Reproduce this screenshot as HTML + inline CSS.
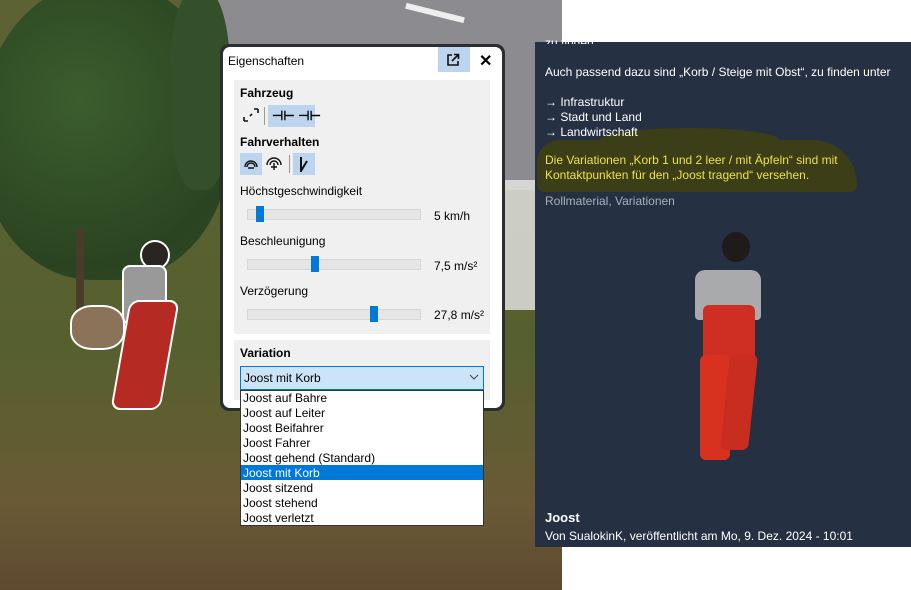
<!DOCTYPE html>
<html><head><meta charset="utf-8"><style>
*{margin:0;padding:0;box-sizing:border-box}
body{width:911px;height:590px;overflow:hidden;position:relative;background:#fff;font-family:"Liberation Sans",sans-serif;font-size:12px}
.a{position:absolute}
.t{position:absolute;white-space:nowrap}
</style></head><body>
<!-- scene -->
<div class="a" style="left:0;top:0;width:562px;height:590px;background:linear-gradient(180deg,#5d6233 0%,#56602e 60%,#6a5a36 85%,#5e4a30 100%)"></div>
<div class="a" style="left:190px;top:0;width:372px;height:190px;background:#8b8b90"></div>
<div class="a" style="left:405px;top:10px;width:60px;height:6px;background:#eee;transform:rotate(14deg)"></div>
<div class="a" style="left:-20px;top:-20px;width:250px;height:300px;border-radius:50% 50% 45% 45%;background:radial-gradient(circle at 40% 40%,#3c5e2e,#2a4421 70%,#304a26)"></div>
<div class="a" style="left:170px;top:-10px;width:60px;height:200px;background:#34502a;border-radius:40%"></div>
<div class="a" style="left:76px;top:230px;width:8px;height:80px;background:#4a3b2a"></div>
<div class="a" style="left:505px;top:180px;width:57px;height:130px;background:#e8e8e8;opacity:.8"></div>
<!-- man left -->
<div class="a" style="left:140px;top:240px;width:30px;height:30px;border-radius:50%;background:#2a2522;border:2px solid #fff"></div>
<div class="a" style="left:122px;top:265px;width:45px;height:60px;background:#999;border-radius:8px;border:2px solid #fff"></div>
<div class="a" style="left:120px;top:300px;width:50px;height:110px;background:#b52a22;border-radius:10px;border:2px solid #fff;transform:skewX(-10deg)"></div>
<div class="a" style="left:70px;top:305px;width:55px;height:45px;background:#8a7358;border-radius:40%;border:2px solid #fff"></div>
<!-- dialog -->
<div class="a" style="left:220px;top:44px;width:285px;height:367px;background:#2a2e30;border-radius:9px"></div>
<div class="a" style="left:223px;top:47px;width:279px;height:361px;background:#fff;border-radius:7px"></div>
<div class="t" style="left:228px;top:54px">Eigenschaften</div>
<div class="a" style="left:438px;top:47px;width:32px;height:25px;background:#bcd4ee"></div>
<svg class="a" style="left:446px;top:53px" width="14" height="14" viewBox="0 0 14 14"><path d="M6 2H2v10h10V8M8 1.5h4.5V6M12.5 1.5L6 8" fill="none" stroke="#111" stroke-width="1.6"/></svg>
<div class="t" style="left:479px;top:51px;font-size:16px;font-weight:bold">✕</div>
<div class="a" style="left:234px;top:80px;width:256px;height:254px;background:#f0f0f0"></div>
<div class="t" style="left:240px;top:86px;font-weight:bold">Fahrzeug</div>
<svg class="a" style="left:243px;top:108px" width="16" height="14"><path d="M1 13h4M1 13V9M15 1h-4M15 1v4M7 8l2-2" stroke="#111" stroke-width="1.6" fill="none"/></svg>
<div class="a" style="left:264px;top:107px;width:1px;height:18px;background:#999"></div>
<div class="a" style="left:268px;top:105px;width:47px;height:22px;background:#bcd4ee"></div>
<div class="t" style="left:272px;top:108px;font-weight:bold;font-size:13px">⊣⊢ ⊣⊢</div>
<div class="t" style="left:240px;top:135px;font-weight:bold">Fahrverhalten</div>
<div class="a" style="left:240px;top:153px;width:22px;height:22px;background:#bcd4ee"></div>
<svg class="a" style="left:243px;top:157px" width="16" height="12"><path d="M2 10A6 6 0 0 1 14 10M4 10A4 4 0 0 1 12 10M5 11h6" stroke="#111" stroke-width="1.4" fill="none"/></svg>
<svg class="a" style="left:265px;top:156px" width="18" height="15"><path d="M2 9A7 7 0 0 1 16 9M5 9A4 4 0 0 1 13 9M9 7v7M6 11h6" stroke="#111" stroke-width="1.4" fill="none"/></svg>
<div class="a" style="left:289px;top:155px;width:1px;height:18px;background:#999"></div>
<div class="a" style="left:293px;top:153px;width:22px;height:22px;background:#bcd4ee"></div>
<svg class="a" style="left:298px;top:156px" width="12" height="16"><path d="M3 1v14L9 5" stroke="#111" stroke-width="2" fill="none"/></svg>
<div class="t" style="left:240px;top:184px">Höchstgeschwindigkeit</div>
<div class="t" style="left:240px;top:234px">Beschleunigung</div>
<div class="t" style="left:240px;top:284px">Verzögerung</div>
<div class="a" style="left:247px;top:209px;width:174px;height:11px;background:#e6e6e6;border:1px solid #d6d6d6"></div>
<div class="a" style="left:256px;top:206px;width:8px;height:16px;background:#0078d7"></div>
<div class="t" style="left:434px;top:209px">5 km/h</div>
<div class="a" style="left:247px;top:259px;width:174px;height:11px;background:#e6e6e6;border:1px solid #d6d6d6"></div>
<div class="a" style="left:311px;top:256px;width:8px;height:16px;background:#0078d7"></div>
<div class="t" style="left:434px;top:259px">7,5 m/s²</div>
<div class="a" style="left:247px;top:309px;width:174px;height:11px;background:#e6e6e6;border:1px solid #d6d6d6"></div>
<div class="a" style="left:370px;top:306px;width:8px;height:16px;background:#0078d7"></div>
<div class="t" style="left:434px;top:308px">27,8 m/s²</div>
<div class="a" style="left:234px;top:340px;width:256px;height:60px;background:#f0f0f0"></div>
<div class="t" style="left:240px;top:346px;font-weight:bold">Variation</div>
<div class="a" style="left:240px;top:366px;width:244px;height:24px;background:#cce4f7;border:1px solid #0078d7"></div>
<div class="t" style="left:244px;top:371px">Joost mit Korb</div>
<svg class="a" style="left:469px;top:374px" width="10" height="7"><path d="M1 1l4 4 4-4" stroke="#444" fill="none"/></svg>
<div class="a" style="left:240px;top:390px;width:244px;height:136px;background:#fff;border:1px solid #333"></div>
<div class="a" style="left:241px;top:465px;width:242px;height:15px;background:#0078d7"></div>
<div class="a" style="left:243px;top:391px;line-height:15px">Joost auf Bahre<br>Joost auf Leiter<br>Joost Beifahrer<br>Joost Fahrer<br>Joost gehend (Standard)<br><span style="color:#fff">Joost mit Korb</span><br>Joost sitzend<br>Joost stehend<br>Joost verletzt</div>
<!-- right panel -->
<div class="a" style="left:530px;top:0;width:32px;height:42px;background:#8b8b90"></div>
<div class="a" style="left:535px;top:42px;width:376px;height:505px;background:#253143"></div>
<div class="a" style="left:537px;top:140px;width:320px;height:52px;background:#3b3e17;border-radius:30px 60px 10px 10px"></div>
<div class="a" style="left:600px;top:128px;width:180px;height:25px;background:#3b3e17;border-radius:50%"></div>
<div class="t" style="left:545px;top:36px;color:#fff;height:8px;overflow:hidden">zu finden.</div>
<div class="a" style="left:545px;top:65px;color:#fff;line-height:15px">Auch passend dazu sind „Korb / Steige mit Obst“, zu finden unter<br><br>→ Infrastruktur<br>→ Stadt und Land<br>→ Landwirtschaft</div>
<div class="a" style="left:545px;top:153px;color:#ede24a;line-height:15px">Die Variationen „Korb 1 und 2 leer / mit Äpfeln“ sind mit<br>Kontaktpunkten für den „Joost tragend“ versehen.</div>
<div class="t" style="left:545px;top:194px;color:#a8afb8">Rollmaterial, Variationen</div>
<!-- man right -->
<div class="a" style="left:722px;top:232px;width:28px;height:30px;border-radius:50%;background:#1e1b1a"></div>
<div class="a" style="left:695px;top:270px;width:66px;height:50px;background:#a9aaac;border-radius:10px 10px 4px 4px"></div>
<div class="a" style="left:703px;top:305px;width:52px;height:60px;background:#cf2f22;border-radius:6px"></div>
<div class="a" style="left:700px;top:355px;width:30px;height:105px;background:#d9311f;border-radius:6px"></div>
<div class="a" style="left:725px;top:355px;width:28px;height:95px;background:#c92d20;border-radius:6px;transform:skewX(-6deg)"></div>
<div class="t" style="left:545px;top:510px;color:#fff;font-weight:bold;font-size:13px">Joost</div>
<div class="t" style="left:545px;top:529px;color:#fff">Von SualokinK, veröffentlicht am Mo, 9. Dez. 2024 - 10:01</div>
</body></html>
